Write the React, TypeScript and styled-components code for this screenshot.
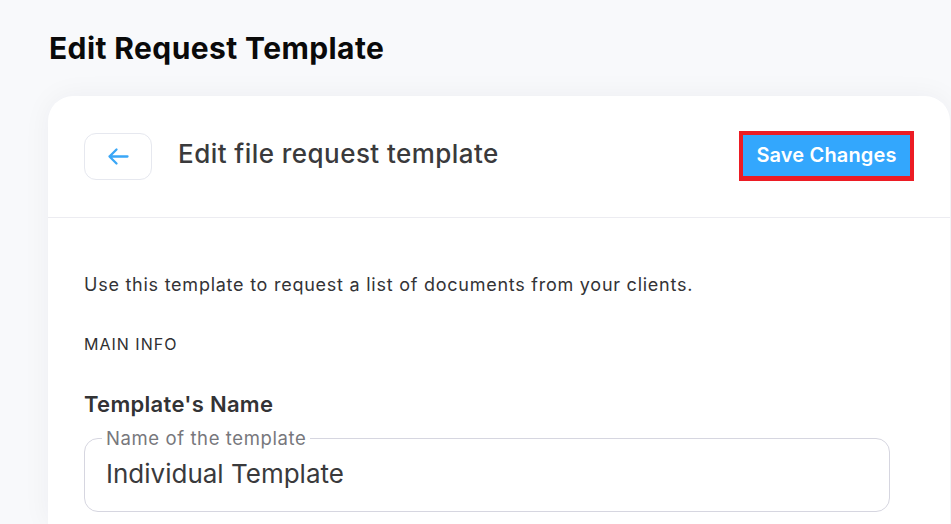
import React from "react";
import styled, { createGlobalStyle } from "styled-components";

const GlobalStyle = createGlobalStyle`
  html, body {
    margin: 0;
    padding: 0;
    background: #f8f9fb;
    font-family: Inter, "Open Sans", Arial, sans-serif;
    -webkit-font-smoothing: antialiased;
  }
  * { box-sizing: border-box; }
`;

const Page = styled.div`
  display: flex;
  flex-direction: column;
  padding: 30px 1px 0 48px;
  min-height: 524px;
`;

const PageTitle = styled.h1`
  margin: 0 0 30px 1px;
  font-size: 30px;
  line-height: 36px;
  font-weight: 700;
  color: #0a0a0a;
  letter-spacing: 0.4px;
`;

const Card = styled.div`
  background: #ffffff;
  border-radius: 25px 25px 0 0;
  box-shadow: 0 0 28px rgba(20, 30, 60, 0.05);
  flex: 1;
`;

const Header = styled.div`
  display: flex;
  align-items: center;
  padding: 35px 36px 36px 36px;
  border-bottom: 1px solid #ececf1;
`;

const BackButton = styled.button`
  width: 68px;
  height: 47px;
  display: flex;
  align-items: center;
  justify-content: center;
  border: 1px solid #e6e8ef;
  border-radius: 12px;
  background: #fff;
  padding: 0;
  cursor: pointer;
`;

const HeaderTitle = styled.h2`
  margin: 0 0 4px 26px;
  flex: 1;
  font-size: 26px;
  line-height: 32px;
  font-weight: 500;
  color: #3a3a3c;
  letter-spacing: 0.45px;
`;

const SaveButton = styled.button`
  height: 50px;
  width: 175px;
  border: 4px solid #ec1c24;
  border-bottom-width: 5px;
  background: #33a7fd;
  color: #ffffff;
  font-family: inherit;
  font-size: 20px;
  font-weight: 600;
  letter-spacing: 0.15px;
  padding: 0 0 1px;
  border-radius: 0;
  cursor: pointer;
`;

const Body = styled.div`
  padding: 55px 36px 0;
  display: flex;
  flex-direction: column;
`;

const Intro = styled.p`
  margin: 0;
  font-size: 18px;
  line-height: 24px;
  color: #333336;
  letter-spacing: 0.75px;
`;

const SectionLabel = styled.div`
  margin-top: 37px;
  font-size: 16px;
  line-height: 20px;
  color: #2f2f31;
  text-transform: uppercase;
  letter-spacing: 1px;
`;

const FieldLabel = styled.div`
  margin-top: 36px;
  font-size: 22px;
  line-height: 28px;
  font-weight: 600;
  color: #333335;
  letter-spacing: 0.3px;
`;

const Fieldset = styled.fieldset`
  margin: 10px 0 0;
  width: 806px;
  padding: 10px 21px 21px;
  border: 1px solid #d6d6e0;
  border-radius: 14px;
  min-width: 0;
`;

const Legend = styled.legend`
  margin-left: -4px;
  padding: 0 4px;
  font-size: 18.5px;
  line-height: 20px;
  color: #77777c;
  letter-spacing: 0.6px;
`;

const Value = styled.div`
  font-size: 26px;
  line-height: 32px;
  color: #3a3a3c;
`;

function ArrowLeftIcon() {
  return (
    <svg width="22" height="19" viewBox="0 0 22 19" fill="none">
      <path
        d="M20.5 9.5H2.5M9.5 2.5L2.5 9.5L9.5 16.5"
        stroke="#3aa7f7"
        strokeWidth="2.3"
        strokeLinecap="round"
        strokeLinejoin="round"
      />
    </svg>
  );
}

export default function App() {
  return (
    <>
      <GlobalStyle />
      <Page>
        <PageTitle>Edit Request Template</PageTitle>
        <Card>
          <Header>
            <BackButton aria-label="Back">
              <ArrowLeftIcon />
            </BackButton>
            <HeaderTitle>Edit file request template</HeaderTitle>
            <SaveButton>Save Changes</SaveButton>
          </Header>
          <Body>
            <Intro>Use this template to request a list of documents from your clients.</Intro>
            <SectionLabel>Main Info</SectionLabel>
            <FieldLabel>Template's Name</FieldLabel>
            <Fieldset>
              <Legend>Name of the template</Legend>
              <Value>Individual Template</Value>
            </Fieldset>
          </Body>
        </Card>
      </Page>
    </>
  );
}
